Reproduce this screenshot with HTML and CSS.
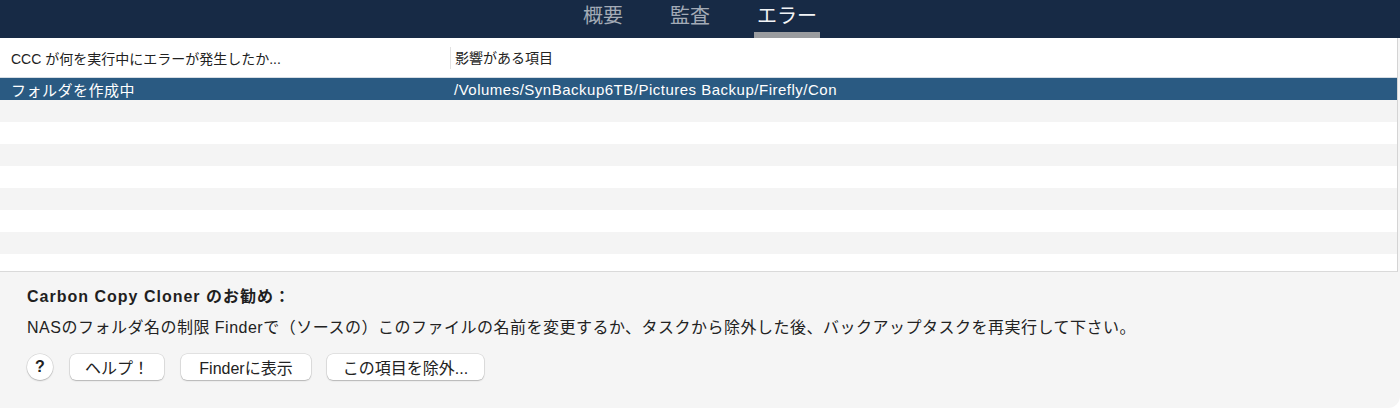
FILE: index.html
```html
<!DOCTYPE html>
<html lang="ja">
<head>
  <meta charset="UTF-8">
  <title>エラー</title>
  <link rel="stylesheet" href="styles.css">
</head>
<body>
  <div class="window">
    <div class="tabbar">
      <span class="tab">概要</span>
      <span class="tab">監査</span>
      <span class="tab active">エラー</span>
    </div>
    <div class="table-wrap">
      <div class="table-head">
        <div class="col-a">CCC が何を実行中にエラーが発生したか...</div>
        <div class="col-b">影響がある項目</div>
      </div>
      <div class="rows">
        <div class="row selected">
          <div class="col-a">フォルダを作成中</div>
          <div class="col-b path">/Volumes/SynBackup6TB/Pictures Backup/Firefly/Con</div>
        </div>
        <div class="row"></div>
        <div class="row"></div>
        <div class="row"></div>
        <div class="row"></div>
        <div class="row"></div>
        <div class="row"></div>
        <div class="row"></div>
        <div class="row"></div>
      </div>
    </div>
    <div class="advice">
      <h2>Carbon Copy Cloner のお勧め：</h2>
      <p>NASのフォルダ名の制限 Finderで（ソースの）このファイルの名前を変更するか、タスクから除外した後、バックアップタスクを再実行して下さい。</p>
      <div class="button-container">
        <button class="help-btn">?</button>
        <button class="btn btn-help">ヘルプ！</button>
        <button class="btn btn-finder">Finderに表示</button>
        <button class="btn btn-exclude">この項目を除外...</button>
      </div>
    </div>
  </div>
</body>
</html>
```

FILE: styles.css
```css
body {
    margin: 0;
    padding: 0;
    font-family: "Liberation Sans", "Noto Sans CJK JP", sans-serif;
    background-color: #fff;
    color: #222;
}

.window {
    width: 1400px;
    height: 408px;
    display: flex;
    flex-direction: column;
    overflow: hidden;
    border-bottom-right-radius: 12px;
    background-color: #f5f5f5;
}

.tabbar {
    height: 38px;
    background-color: #172a45;
    display: flex;
    justify-content: center;
    gap: 41px;
    box-sizing: border-box;
}

.tab {
    font-size: 20px;
    line-height: 32px;
    color: #a3abb6;
    width: 46px;
    text-align: center;
    border-bottom: 6px solid transparent;
}

.tab.active {
    color: #f2f4f6;
    width: 66px;
    border-bottom-color: #9a9c9f;
}

.table-wrap {
    width: 1397px;
    height: 233px;
    background-color: #fff;
    border-right: 1px solid #d4d4d4;
    border-bottom: 1px solid #dadada;
    overflow: hidden;
}

.table-head {
    height: 39px;
    display: flex;
    align-items: center;
    font-size: 14px;
    color: #222;
}

.col-a {
    width: 450px;
    padding-left: 11px;
    box-sizing: border-box;
    flex-shrink: 0;
}

.col-b {
    padding-left: 4px;
}

.table-head .col-b {
    border-left: 1px solid #e2e2e2;
    line-height: 22px;
}

.row {
    height: 22px;
    display: flex;
    align-items: center;
    font-size: 15px;
}

.row:nth-child(even) {
    background-color: #f4f4f4;
}

.row.selected {
    background-color: #2a5a82;
    color: #fff;
    border-top: 1px solid #d6dde4;
    letter-spacing: 0.5px;
}

.advice {
    flex: 1;
    padding: 14px 27px 0;
}

.advice h2 {
    margin: 0;
    font-size: 16px;
    font-weight: bold;
    letter-spacing: 1px;
    line-height: 22px;
    color: #1f1f1f;
}

.advice p {
    margin: 9px 0 0;
    font-size: 16px;
    letter-spacing: 0.5px;
    line-height: 22px;
    color: #222;
}

.button-container {
    display: flex;
    gap: 17px;
    margin-top: 15px;
    align-items: center;
}

.button-container button {
    font-family: "Liberation Sans", "Noto Sans CJK JP", sans-serif;
    font-size: 16px;
    color: #222;
    background-color: #fff;
    border: none;
    box-shadow: 0 0 0 0.5px rgba(0,0,0,0.15), 0 1px 1.5px rgba(0,0,0,0.2);
    height: 26px;
    padding: 0;
}

.help-btn {
    width: 26px;
    border-radius: 50%;
    font-weight: bold;
    font-size: 17px;
}

.btn {
    border-radius: 6px;
}

.btn-help {
    width: 94px;
}

.btn-finder {
    width: 130px;
}

.btn-exclude {
    width: 157px;
    margin-left: -1px;
}
```
